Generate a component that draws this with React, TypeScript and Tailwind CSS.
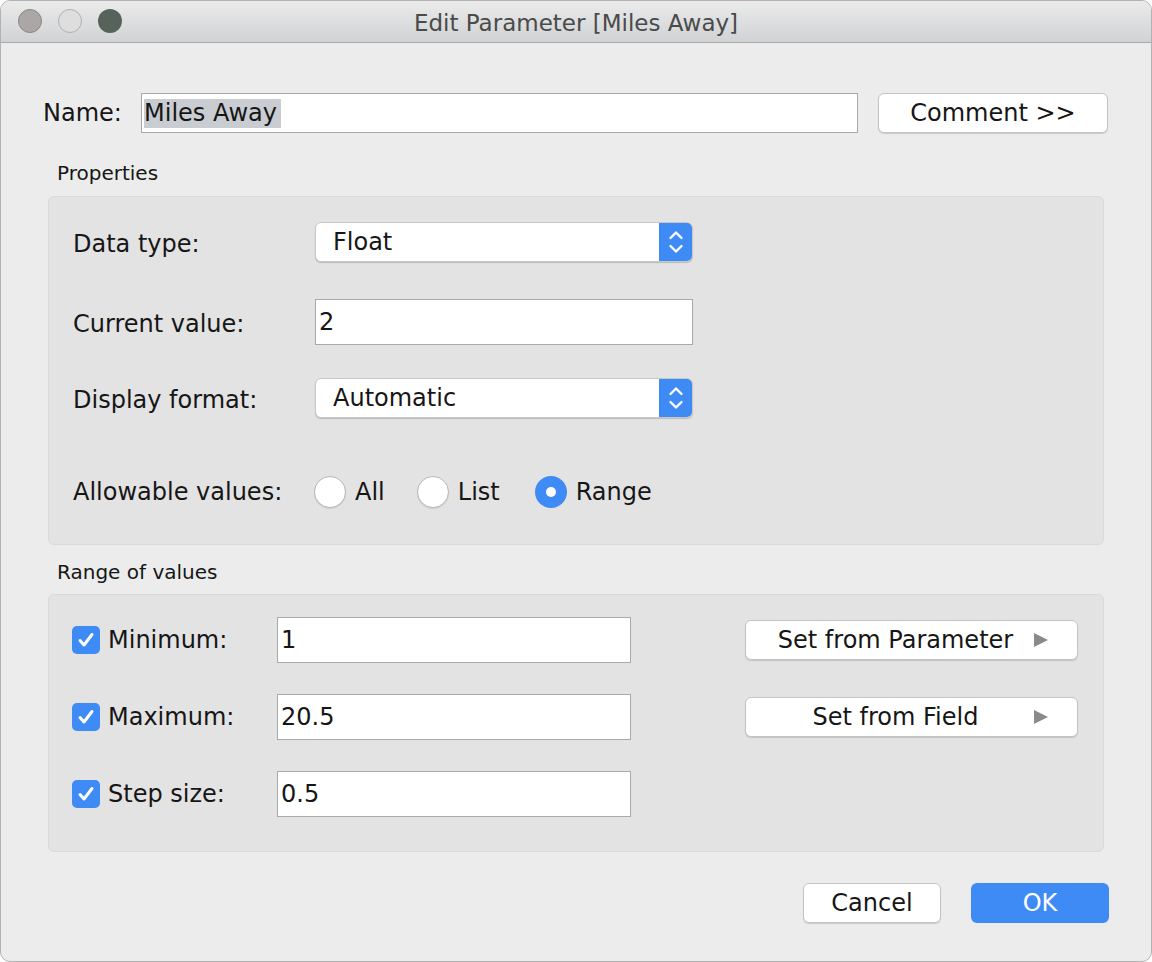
import React from "react"

const font = "font-['DejaVu_Sans',sans-serif]"

function Select({ value }: { value: string }) {
  return (
    <div className="w-[378px] h-[40px] flex rounded-[6px] bg-white border border-[#c6c6c6] shadow-[0_1px_1px_rgba(0,0,0,0.18)] overflow-hidden">
      <div className="flex-1 flex items-center pl-[17px] text-[24px] text-[#161616]">{value}</div>
      <div className="w-[33px] bg-[#3f8bf6] flex items-center justify-center">
        <svg width="18" height="32" viewBox="0 0 18 32" fill="none" stroke="white" strokeWidth="2.4" strokeLinecap="round" strokeLinejoin="round">
          <polyline points="3.5,12 9,6.5 14.5,12" />
          <polyline points="3.5,20 9,25.5 14.5,20" />
        </svg>
      </div>
    </div>
  )
}

function TextBox({ value, width }: { value: string; width: string }) {
  return (
    <div className={`${width} h-[46px] bg-white border border-[#a9a9a9] flex items-center pl-[3px] text-[24px] text-[#161616]`}>
      {value}
    </div>
  )
}

function Radio({ label, checked, className = "" }: { label: string; checked?: boolean; className?: string }) {
  return (
    <div className={`flex items-center gap-[9px] ${className}`}>
      {checked ? (
        <div className="w-[32px] h-[32px] rounded-full bg-[#3f8bf6] flex items-center justify-center">
          <div className="w-[10px] h-[10px] rounded-full bg-white" />
        </div>
      ) : (
        <div className="w-[32px] h-[32px] rounded-full bg-white border border-[#b8b8b8] shadow-[0_1px_1px_rgba(0,0,0,0.1)]" />
      )}
      <span className="text-[24px] text-[#161616]">{label}</span>
    </div>
  )
}

function Check() {
  return (
    <div className="w-[28px] h-[28px] rounded-[5px] bg-[#3f8bf6] flex items-center justify-center">
      <svg width="20" height="20" viewBox="0 0 20 20" fill="none" stroke="white" strokeWidth="3" strokeLinecap="round" strokeLinejoin="round">
        <polyline points="4,10.5 8,15 16,4.5" />
      </svg>
    </div>
  )
}

function MacButton({ children, className = "" }: { children: React.ReactNode; className?: string }) {
  return (
    <div className={`h-[40px] rounded-[6px] bg-white border border-[#c4c4c4] shadow-[0_1px_1px_rgba(0,0,0,0.15)] flex items-center text-[24px] text-[#161616] ${className}`}>
      {children}
    </div>
  )
}

function SetFromButton({ label }: { label: string }) {
  return (
    <MacButton className="w-[333px] h-[39px]">
      <span className="flex-1 text-center pl-[12px]">{label}</span>
      <svg width="16" height="16" viewBox="0 0 16 16" className="mr-[28px]">
        <polygon points="1,1 15,8 1,15" fill="#8a8a8a" />
      </svg>
    </MacButton>
  )
}

function RangeRow({ label, value, button, first }: { label: string; value: string; button?: string; first?: boolean }) {
  return (
    <div className={`flex items-center h-[46px] ${first ? "mt-[22px]" : "mt-[31px]"}`}>
      <div className="w-[205px] flex items-center gap-[8px]">
        <Check />
        <span className="text-[24px] text-[#161616]">{label}</span>
      </div>
      <TextBox value={value} width="w-[354px]" />
      {button && (
        <div className="ml-[114px]">
          <SetFromButton label={button} />
        </div>
      )}
    </div>
  )
}

export default function App() {
  return (
    <div className={`w-[1152px] h-[962px] bg-white ${font}`}>
      <div className="w-full h-full flex flex-col rounded-[10px] border border-[#b2b2b2] overflow-hidden bg-[#ececec]">
        {/* Title bar */}
        <div className="h-[42px] relative flex items-center justify-center pt-[3px] bg-gradient-to-b from-[#ebebeb] to-[#d0d2d4] border-b border-[#a9a9a9]">
          <div className="absolute left-[17px] top-[8px] flex gap-[16px]">
            <div className="w-[24px] h-[24px] rounded-full bg-[#aba7a5] border border-[#8a8685]" />
            <div className="w-[24px] h-[24px] rounded-full bg-[#dedede] border border-[#b0b0b0]" />
            <div className="w-[24px] h-[24px] rounded-full bg-[#57635a]" />
          </div>
          <span className="text-[23px] text-[#4a4a4a]">Edit Parameter [Miles Away]</span>
        </div>

        {/* Name */}
        <div className="ml-[42px] mt-[50px] h-[40px] flex items-center">
          <span className="w-[98px] text-[24px] text-[#161616]">Name:</span>
          <div className="w-[717px] h-[40px] bg-white border border-[#a9a9a9] flex items-center pl-[2px]">
            <span className="bg-[#c9cdd1] text-[24px] text-[#161616] leading-[29px] pr-[4px]">Miles Away</span>
          </div>
          <MacButton className="ml-[20px] w-[230px] justify-center">Comment &gt;&gt;</MacButton>
        </div>

        {/* Properties */}
        <div className="ml-[56px] mt-[28px] text-[20px] leading-[24px] text-[#161616]">Properties</div>
        <div className="mx-[47px] mt-[11px] bg-[#e3e3e3] border border-[#d9d9d9] rounded-[6px] pl-[24px] pb-[36px]">
          <div className="mt-[25px] h-[40px] flex items-center">
            <span className="w-[242px] text-[24px] text-[#161616] pt-[3px]">Data type:</span>
            <Select value="Float" />
          </div>
          <div className="mt-[37px] h-[46px] flex items-center">
            <span className="w-[242px] text-[24px] text-[#161616] pt-[3px]">Current value:</span>
            <TextBox value="2" width="w-[378px]" />
          </div>
          <div className="mt-[33px] h-[40px] flex items-center">
            <span className="w-[242px] text-[24px] text-[#161616] pt-[3px]">Display format:</span>
            <Select value="Automatic" />
          </div>
          <div className="mt-[58px] h-[32px] flex items-center">
            <span className="w-[241px] text-[24px] text-[#161616]">Allowable values:</span>
            <Radio label="All" />
            <Radio label="List" className="ml-[32px]" />
            <Radio label="Range" checked className="ml-[35px]" />
          </div>
        </div>

        {/* Range of values */}
        <div className="ml-[56px] mt-[15px] text-[20px] leading-[24px] text-[#161616]">Range of values</div>
        <div className="mx-[47px] mt-[10px] bg-[#e3e3e3] border border-[#d9d9d9] rounded-[6px] pl-[23px] pb-[34px]">
          <RangeRow label="Minimum:" value="1" button="Set from Parameter" first />
          <RangeRow label="Maximum:" value="20.5" button="Set from Field" />
          <RangeRow label="Step size:" value="0.5" />
        </div>

        {/* Footer */}
        <div className="mt-[31px] mr-[42px] flex justify-end gap-[30px]">
          <MacButton className="w-[138px] justify-center">Cancel</MacButton>
          <div className="w-[138px] h-[40px] rounded-[6px] bg-[#3f8bf6] flex items-center justify-center text-[24px] text-white">OK</div>
        </div>
      </div>
    </div>
  )
}
